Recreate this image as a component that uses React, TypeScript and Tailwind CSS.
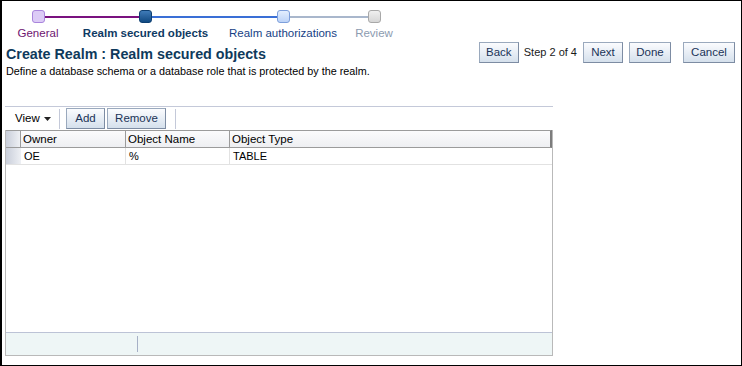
const font = { fontFamily: '"Liberation Sans", Arial, sans-serif' };

const stops = [
  { label: 'General', w: 'w-[72px]', box: 'bg-[#dccbf6] border-[#a985dc]', text: 'text-[#6e1470]', left: 'bg-transparent', right: 'bg-[#7a127f]' },
  { label: 'Realm secured objects', w: 'w-[143px]', box: 'bg-gradient-to-b from-[#3f7bb8] to-[#114a82] border-[#0d3f72]', text: 'text-[#0f3a63] font-bold', left: 'bg-[#7a127f]', right: 'bg-[#3a6fd6]' },
  { label: 'Realm authorizations', w: 'w-[132px]', box: 'bg-gradient-to-b from-[#e3eefe] to-[#bcd3f7] border-[#7d9fdb]', text: 'text-[#173f85]', left: 'bg-[#3a6fd6]', right: 'bg-[#a9b7cc]' },
  { label: 'Review', w: 'w-[50px]', box: 'bg-gradient-to-b from-[#f0f0f0] to-[#d6d6d6] border-[#a8a8a8]', text: 'text-[#8c9bb0]', left: 'bg-[#a9b7cc]', right: 'bg-transparent' },
];

const btn = 'h-[21px] border border-[#9aa9bd] border-b-[#7d8ca3] border-r-[#7d8ca3] bg-gradient-to-b from-[#fbfcfe] to-[#d5e0ec] text-[11.5px] text-[#1a3358] flex items-center justify-center';

function Btn({ children, w }: { children: React.ReactNode; w: string }) {
  return <button className={`${w} ${btn}`}>{children}</button>;
}

export default function App() {
  return (
    <div className="w-[742px] h-[366px] bg-white border-t border-r border-b border-l-2 border-black overflow-hidden text-[11px] text-black" style={font}>
      {/* train */}
      <div className="flex pt-[9px]">
        {stops.map(s => (
          <div key={s.label} className={`${s.w} flex flex-col items-center`}>
            <div className="w-full flex items-center">
              <div className={`flex-1 h-[2px] ${s.left}`} />
              <div className={`w-[13px] h-[13px] rounded-[3px] border ${s.box}`} />
              <div className={`flex-1 h-[2px] ${s.right}`} />
            </div>
            <div className={`mt-[3px] whitespace-nowrap text-[11.5px] leading-[14px] ${s.text}`}>{s.label}</div>
          </div>
        ))}
      </div>

      {/* header */}
      <div className="flex items-start pl-[4px] pr-[6px] mt-[1px]">
        <div className="flex-1 pt-[4px]">
          <h1 className="text-[14.3px] leading-[18px] font-bold text-[#0e3a5c]">Create Realm : Realm secured objects</h1>
          <p className="mt-[2px] leading-[13px] text-[10.8px]">Define a database schema or a database role that is protected by the realm.</p>
        </div>
        <div className="flex items-center pt-[1px]">
          <Btn w="w-[40px]">Back</Btn>
          <span className="ml-[5px] mr-[6px] text-[11px] text-[#1a1a1a]">Step 2 of 4</span>
          <Btn w="w-[40px]">Next</Btn>
          <div className="w-[6px]" />
          <Btn w="w-[42px]">Done</Btn>
          <div className="w-[12px]" />
          <Btn w="w-[52px]">Cancel</Btn>
        </div>
      </div>

      {/* table panel */}
      <div className="ml-[3px] mt-[28px] w-[548px]">
        <div className="border-t border-[#c4c9d9] h-[24px] flex items-center">
          <div className="flex items-center pl-[10px] w-[54px] text-[11.5px]">
            View
            <svg width="7" height="4" viewBox="0 0 7 4" className="ml-[4px] mt-[1px]">
              <path d="M0 0h7L3.5 4z" fill="#222" />
            </svg>
          </div>
          <div className="w-px h-[20px] bg-[#c4c9d9]" />
          <div className="w-[6px]" />
          <Btn w="w-[39px]">Add</Btn>
          <div className="w-[2px]" />
          <Btn w="w-[59px]">Remove</Btn>
          <div className="w-[9px]" />
          <div className="w-px h-[20px] bg-[#c4c9d9]" />
        </div>
        <div className="border-l border-r border-b border-[#b9b9b9] h-[226px] flex flex-col">
          <div className="flex h-[18px] border-t border-b border-[#9b9b9b] border-r-2 border-r-[#7c7c7c] bg-gradient-to-b from-[#fbfbfc] to-[#eeeff2] text-[11.5px]">
            <div className="w-[15px] bg-gradient-to-r from-[#c9ceda] to-[#eef0f4] border-r border-[#9b9b9b]" />
            <div className="w-[105px] pl-[2px] border-r border-[#9b9b9b] leading-[16px]">Owner</div>
            <div className="w-[104px] pl-[2px] border-r border-[#9b9b9b] leading-[16px]">Object Name</div>
            <div className="flex-1 pl-[2px] leading-[16px]">Object Type</div>
          </div>
          <div className="flex h-[17px] border-b border-[#e2e2e2] text-[11px]">
            <div className="w-[15px] bg-gradient-to-r from-[#c9ceda] to-[#eef0f4]" />
            <div className="w-[105px] pl-[3px] border-r border-[#e2e2e2] leading-[16px]">OE</div>
            <div className="w-[104px] pl-[3px] border-r border-[#e2e2e2] leading-[16px]">%</div>
            <div className="flex-1 pl-[3px] leading-[16px]">TABLE</div>
          </div>
          <div className="flex-1" />
          <div className="h-[23px] border-t border-[#bcc3d6] bg-[#eef6f6] flex items-center">
            <div className="w-[131px]" />
            <div className="w-px h-[16px] bg-[#a6b0c6]" />
          </div>
        </div>
      </div>
    </div>
  );
}
